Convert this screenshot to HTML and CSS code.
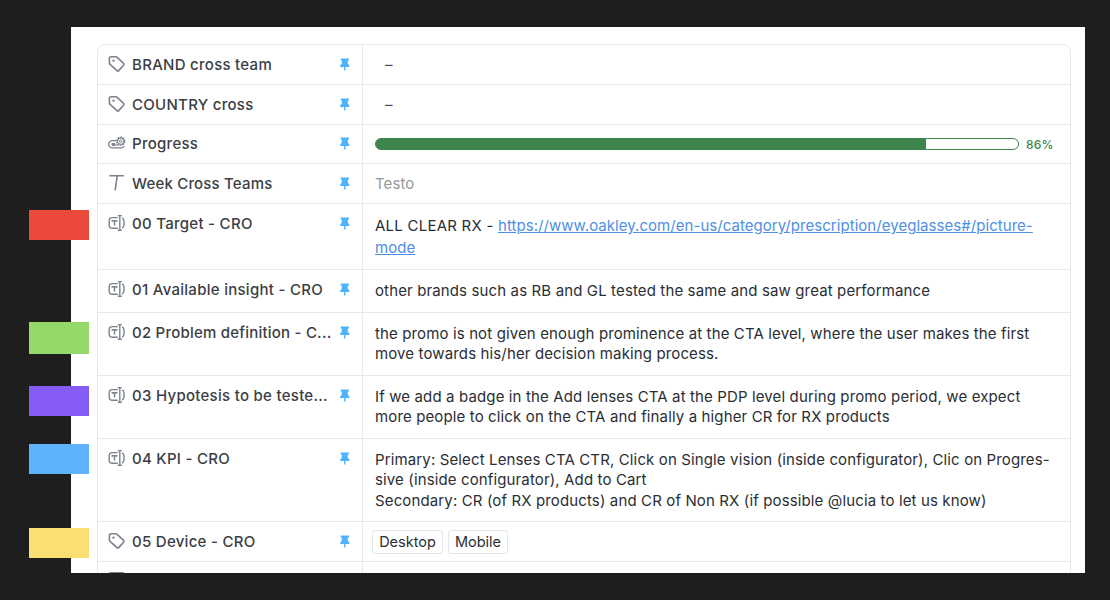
FILE: index.html
```html
<!DOCTYPE html>
<html lang="en">
<head>
<meta charset="utf-8">
<title>Custom fields</title>
<link rel="stylesheet" href="styles.css">
</head>
<body>
<svg class="sprite" aria-hidden="true">
  <symbol id="tag" viewBox="0 0 18 18"><path d="M1.4 3.6Q1.4 1.8 3.2 1.8H7.7Q8.5 1.8 9.1 2.3L15.6 8.3Q16.5 9.2 15.6 10.2L10.7 15.6Q9.8 16.5 8.9 15.7L2.1 9.4Q1.4 8.8 1.4 7.8Z" fill="none" stroke="currentColor" stroke-width="1.6" stroke-linejoin="round"/><circle cx="5.5" cy="5.6" r="1.2" fill="currentColor"/></symbol>
  <symbol id="progress" viewBox="0 0 18 18"><path d="M8 6.6H4.4A3.6 3.6 0 0 0 4.4 13.9H13.2Q15.6 13.9 15.9 12" fill="none" stroke="currentColor" stroke-width="1.4"/><rect x="3.4" y="9" width="4.2" height="2.9" rx="1.4" fill="currentColor"/><path d="M7.4 11.1H10.4" stroke="currentColor" stroke-width="1"/><circle cx="12.7" cy="7.2" r="3.8" fill="none" stroke="currentColor" stroke-width="1.6" stroke-dasharray="1.9 .48"/><circle cx="12.7" cy="7.2" r="3" fill="none" stroke="currentColor" stroke-width=".7"/><circle cx="12.7" cy="7.2" r="1.2" fill="none" stroke="currentColor"/></symbol>
  <symbol id="letter" viewBox="0 0 18 18"><path d="M2.1 2.6V1.8H15V2.6M9.2 1.8L7.1 16.4" fill="none" stroke="currentColor" stroke-width="1.6"/></symbol>
  <symbol id="field" viewBox="0 0 18 18"><path d="M9.8 3.6H4.5Q1.2 3.6 1.2 6.7V11.2Q1.2 14.3 4.5 14.3H9.8M14 3.9Q16 4.7 16 7.2V10.7Q16 13.2 14 14M9.8 1.6H13.8M11.8 1.6V16.3M9.8 16.3H13.8" fill="none" stroke="currentColor" stroke-width="1.4"/><path d="M4.3 7.8V6.8H8.7V7.8M6.5 6.8V11.4" fill="none" stroke="currentColor" stroke-width="1.5"/></symbol>
  <symbol id="pin" viewBox="0 0 10 14"><path d="M.7 1.6H8.9V3.5H7.8V6.7L9.4 8.5V9.9H5.5V13.4H4.1V9.9H.2V8.5L1.8 6.7V3.5H.7Z" fill="currentColor"/></symbol>
</svg>

<main class="panel">
  <div class="fields">
    <div class="name"><svg class="icon"><use href="#tag"/></svg><span class="label">BRAND cross team</span><svg class="pin"><use href="#pin"/></svg></div>
    <div class="value empty">–</div>

    <div class="name"><svg class="icon"><use href="#tag"/></svg><span class="label">COUNTRY cross</span><svg class="pin"><use href="#pin"/></svg></div>
    <div class="value empty">–</div>

    <div class="name tight"><svg class="icon"><use href="#progress"/></svg><span class="label">Progress</span><svg class="pin"><use href="#pin"/></svg></div>
    <div class="value meter"><div class="bar"><div class="fill" style="width:85.7%"></div></div><span class="percent">86%</span></div>

    <div class="name"><svg class="icon"><use href="#letter"/></svg><span class="label week">Week Cross Teams</span><svg class="pin"><use href="#pin"/></svg></div>
    <div class="value placeholder">Testo</div>

    <div class="name"><svg class="icon"><use href="#field"/></svg><span class="label">00 Target - CRO</span><svg class="pin"><use href="#pin"/></svg></div>
    <div class="value text target"><span class="prefix">ALL CLEAR RX - </span><a class="link">https://www.oakley.com/en-us/category/prescription/eyeglasses#/picture-<br>mode</a></div>

    <div class="name"><svg class="icon"><use href="#field"/></svg><span class="label">01 Available insight - CRO</span><svg class="pin"><use href="#pin"/></svg></div>
    <div class="value text">other brands such as RB and GL tested the same and saw great performance</div>

    <div class="name"><svg class="icon"><use href="#field"/></svg><span class="label long">02 Problem definition - C...</span><svg class="pin"><use href="#pin"/></svg></div>
    <div class="value text">the promo is not given enough prominence at the CTA level, where the user makes the first<br>move towards his/her decision making process.</div>

    <div class="name"><svg class="icon"><use href="#field"/></svg><span class="label">03 Hypotesis to be teste...</span><svg class="pin"><use href="#pin"/></svg></div>
    <div class="value text">If we add a badge in the Add lenses CTA at the PDP level during promo period, we expect<br>more people to click on the CTA and finally a higher CR for RX products</div>

    <div class="name"><svg class="icon"><use href="#field"/></svg><span class="label">04 KPI - CRO</span><svg class="pin"><use href="#pin"/></svg></div>
    <div class="value text">Primary: Select Lenses CTA CTR, Click on Single vision (inside configurator), Clic on Progres-<br>sive (inside configurator), Add to Cart<br>Secondary: CR (of RX products) and CR of Non RX (if possible @lucia to let us know)</div>

    <div class="name"><svg class="icon"><use href="#tag"/></svg><span class="label">05 Device - CRO</span><svg class="pin"><use href="#pin"/></svg></div>
    <div class="value chips"><span class="chip desktop">Desktop</span><span class="chip mobile">Mobile</span></div>

    <div class="name tight"><svg class="icon"><use href="#letter"/></svg></div>
    <div class="value"></div>
  </div>
</main>

<i class="marker red"></i>
<i class="marker green"></i>
<i class="marker purple"></i>
<i class="marker blue"></i>
<i class="marker yellow"></i>
</body>
</html>
```
FILE: styles.css
```css
* { box-sizing: border-box; }

body {
  margin: 0;
  width: 1110px;
  height: 600px;
  padding: 27px 25px 27px 71px;
  background: #1e1e1e;
  color: #2a2e34;
  font-family: Inter, "Liberation Sans", sans-serif;
  overflow: hidden;
  position: relative;
}

.sprite { display: none; }

.panel {
  height: 546px;
  padding: 17px 14px 0 26px;
  background: #fff;
  overflow: hidden;
}

.fields {
  display: grid;
  grid-template-columns: 265px 1fr;
  grid-template-rows: 40px 40px 39px 40px 66px 43px 63px 63px 83px 40px 40px;
  border: 1px solid #e8e9f0;
  border-radius: 8px;
}

.name {
  display: flex;
  align-items: flex-start;
  padding: 10px 12px 0 10px;
  border-right: 1px solid #e8e9f0;
  border-bottom: 1px solid #e8e9f0;
  white-space: nowrap;
}

.tight { padding-top: 9px; }

.icon {
  width: 18px;
  height: 18px;
  margin-right: 6px;
  color: #7c828d;
  flex: none;
}

.label {
  flex: 1;
  font-size: 15px;
  line-height: 19px;
  font-weight: 500;
  letter-spacing: 0.28px;
  color: #3b3e44;
}

.week { letter-spacing: 0.18px; }
.long { letter-spacing: 0.22px; }

.pin {
  width: 10px;
  height: 14px;
  margin-top: 2px;
  color: #4fb3fb;
  flex: none;
}

.value {
  padding: 0 12px;
  border-bottom: 1px solid #e8e9f0;
  font-size: 15px;
  white-space: nowrap;
}

.empty {
  padding-left: 22px;
  line-height: 40px;
  color: #4a4d52;
}

.placeholder {
  line-height: 39px;
  letter-spacing: 0.1px;
  color: #999;
}

.meter {
  display: flex;
  align-items: center;
  gap: 7px;
}

.bar {
  width: 644px;
  height: 12px;
  border: 1px solid #3d854a;
  border-radius: 6px;
  background: #3d854a;
  background: linear-gradient(90deg, #3d854a 50%, #fff 50%);
  overflow: hidden;
}

.fill {
  height: 100%;
  background: #3d854a;
}

.percent {
  font-size: 12px;
  font-weight: 500;
  letter-spacing: 0.2px;
  color: #3d854a;
}

.text {
  padding-top: 11px;
  line-height: 20.3px;
  letter-spacing: 0.13px;
}

.target { line-height: 22px; }

.prefix { letter-spacing: 0.24px; }

.link {
  color: #4f8fe3;
  letter-spacing: 0.045px;
  text-decoration: underline;
}

.chips {
  display: flex;
  align-items: center;
  gap: 5px;
  padding-left: 9px;
}

.chip {
  height: 24px;
  border: 1px solid #e4e5e8;
  border-radius: 3px;
  font-size: 14.5px;
  line-height: 22px;
  text-align: center;
}

.desktop { width: 71px; }
.mobile { width: 60px; }

.marker {
  position: absolute;
  left: 29px;
  width: 60px;
  height: 30px;
}

.red { top: 210px; background: #ec493d; }
.green { top: 322px; height: 32px; background: #95d86a; }
.purple { top: 386px; background: #855cf6; }
.blue { top: 444px; background: #5eb3fc; }
.yellow { top: 528px; background: #fbdf72; }
```
